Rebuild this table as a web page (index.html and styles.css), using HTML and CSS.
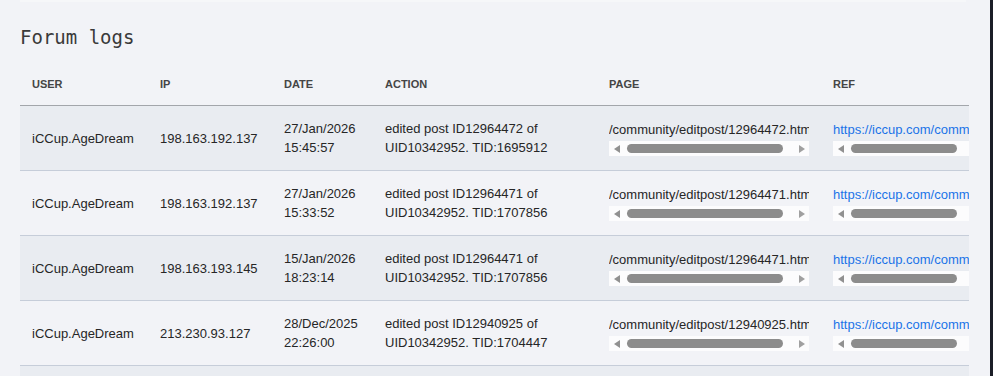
FILE: index.html
```html
<!DOCTYPE html>
<html lang="en">
<head>
  <meta charset="UTF-8">
  <title>Forum logs</title>
  <link rel="stylesheet" href="styles.css">
</head>
<body>
  <div class="page">
    <main class="content">
      <div class="card-edge"></div>
      <h2 class="title">Forum logs</h2>
      <div class="table-wrap">
        <table class="logs">
          <colgroup>
            <col class="c-user"><col class="c-ip"><col class="c-date"><col class="c-action"><col class="c-page"><col class="c-ref">
          </colgroup>
          <thead>
            <tr>
              <th>User</th><th>IP</th><th>Date</th><th>Action</th><th>Page</th><th>Ref</th>
            </tr>
          </thead>
          <tbody>
            <tr>
              <td>iCCup.AgeDream</td>
              <td>198.163.192.137</td>
              <td>27/Jan/2026<br>15:45:57</td>
              <td>edited post ID12964472 of<br>UID10342952. TID:1695912</td>
              <td>
                <div class="clip">/community/editpost/12964472.html</div>
                <div class="hbar"><span class="arrow left"></span><span class="thumb page-thumb"></span><span class="arrow right"></span></div>
              </td>
              <td>
                <div class="clip"><a href="#">https://iccup.com/community/editpost/12964472.html</a></div>
                <div class="hbar"><span class="arrow left"></span><span class="thumb ref-thumb"></span><span class="arrow right"></span></div>
              </td>
            </tr>
            <tr>
              <td>iCCup.AgeDream</td>
              <td>198.163.192.137</td>
              <td>27/Jan/2026<br>15:33:52</td>
              <td>edited post ID12964471 of<br>UID10342952. TID:1707856</td>
              <td>
                <div class="clip">/community/editpost/12964471.html</div>
                <div class="hbar"><span class="arrow left"></span><span class="thumb page-thumb"></span><span class="arrow right"></span></div>
              </td>
              <td>
                <div class="clip"><a href="#">https://iccup.com/community/editpost/12964471.html</a></div>
                <div class="hbar"><span class="arrow left"></span><span class="thumb ref-thumb"></span><span class="arrow right"></span></div>
              </td>
            </tr>
            <tr>
              <td>iCCup.AgeDream</td>
              <td>198.163.193.145</td>
              <td>15/Jan/2026<br>18:23:14</td>
              <td>edited post ID12964471 of<br>UID10342952. TID:1707856</td>
              <td>
                <div class="clip">/community/editpost/12964471.html</div>
                <div class="hbar"><span class="arrow left"></span><span class="thumb page-thumb"></span><span class="arrow right"></span></div>
              </td>
              <td>
                <div class="clip"><a href="#">https://iccup.com/community/editpost/12964471.html</a></div>
                <div class="hbar"><span class="arrow left"></span><span class="thumb ref-thumb"></span><span class="arrow right"></span></div>
              </td>
            </tr>
            <tr>
              <td>iCCup.AgeDream</td>
              <td>213.230.93.127</td>
              <td>28/Dec/2025<br>22:26:00</td>
              <td>edited post ID12940925 of<br>UID10342952. TID:1704447</td>
              <td>
                <div class="clip">/community/editpost/12940925.html</div>
                <div class="hbar"><span class="arrow left"></span><span class="thumb page-thumb"></span><span class="arrow right"></span></div>
              </td>
              <td>
                <div class="clip"><a href="#">https://iccup.com/community/editpost/12940925.html</a></div>
                <div class="hbar"><span class="arrow left"></span><span class="thumb ref-thumb"></span><span class="arrow right"></span></div>
              </td>
            </tr>
            <tr>
              <td>iCCup.AgeDream</td>
              <td>213.230.93.127</td>
              <td>28/Dec/2025<br>22:20:41</td>
              <td>edited post ID12940925 of<br>UID10342952. TID:1704447</td>
              <td>
                <div class="clip">/community/editpost/12940925.html</div>
                <div class="hbar"><span class="arrow left"></span><span class="thumb page-thumb"></span><span class="arrow right"></span></div>
              </td>
              <td>
                <div class="clip"><a href="#">https://iccup.com/community/editpost/12940925.html</a></div>
                <div class="hbar"><span class="arrow left"></span><span class="thumb ref-thumb"></span><span class="arrow right"></span></div>
              </td>
            </tr>
          </tbody>
        </table>
      </div>
    </main>
    <div class="side-edge"></div>
  </div>
</body>
</html>
```

FILE: styles.css
```css
* { box-sizing: border-box; }

html, body {
  margin: 0;
  padding: 0;
  height: 100%;
  overflow: hidden;
}

body {
  background: #f2f3f7;
  font-family: "Liberation Sans", Arial, sans-serif;
  color: #262626;
}

.page {
  display: flex;
  height: 100%;
}

.content {
  width: 990px;
  padding: 0 21px 0 20px;
}

.card-edge {
  height: 2px;
  margin-right: 3px;
  background: #f6f7f9;
}

.side-edge {
  flex: 1;
  background: #1b1e27;
}

.title {
  margin: 21px 0 0 0;
  font-family: "DejaVu Sans Mono", monospace;
  font-weight: normal;
  font-size: 19px;
  line-height: 28px;
  color: #3a3a3a;
}

.table-wrap {
  margin-top: 17px;
  overflow: hidden;
}

.logs {
  width: 1100px;
  table-layout: fixed;
  border-collapse: collapse;
}

.c-user { width: 128px; }
.c-ip { width: 124px; }
.c-date { width: 101px; }
.c-action { width: 224px; }
.c-page { width: 224px; }
.c-ref { width: 299px; }

.logs th {
  text-align: left;
  text-transform: uppercase;
  font-size: 11px;
  line-height: 13px;
  font-weight: bold;
  color: #454545;
  padding: 10px 12px 14px;
  border-bottom: 1px solid #a3a6ab;
}

.logs td {
  font-size: 13px;
  line-height: 19px;
  padding: 13px 12px;
  vertical-align: middle;
  border-bottom: 1px solid #c6cdd9;
  white-space: nowrap;
}

.logs tbody tr:nth-child(odd) { background: #e9ecf1; }
.logs tbody tr:nth-child(even) { background: #f2f3f7; }

.clip {
  width: 200px;
  overflow: hidden;
  white-space: nowrap;
}

.clip a {
  color: #1a73e8;
  text-decoration: none;
}

/* drawn horizontal scrollbar under long urls */
.hbar {
  display: flex;
  align-items: center;
  width: 200px;
  height: 15px;
  margin-top: 2px;
  background: #fcfcfd;
}

.arrow {
  width: 15px;
  height: 15px;
  display: flex;
  align-items: center;
  justify-content: center;
  flex-shrink: 0;
}

.arrow::before {
  content: '';
  width: 0;
  height: 0;
  border-top: 4px solid transparent;
  border-bottom: 4px solid transparent;
}

.arrow.left::before { border-right: 6px solid #909090; }
.arrow.right::before { border-left: 6px solid #a0a0a0; }

.arrow.right { margin-left: auto; }

.thumb {
  height: 9px;
  margin-left: 3px;
  border-radius: 5px;
  background: #8c8c8c;
}

.page-thumb { width: 156px; }
.ref-thumb { width: 106px; }
```
